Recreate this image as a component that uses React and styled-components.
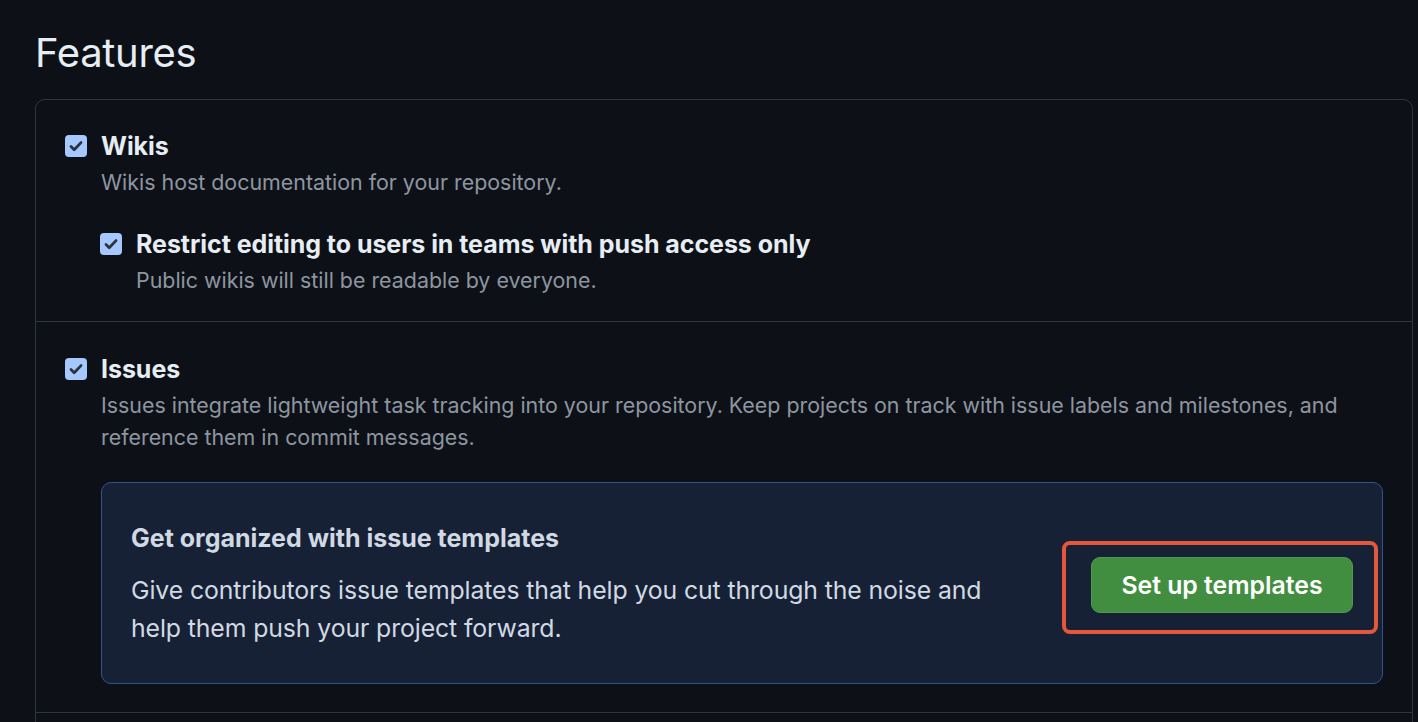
import { createGlobalStyle, styled } from "styled-components";

const GlobalStyle = createGlobalStyle`
  html, body {
    margin: 0;
    background: #0d1117;
  }
  body {
    font-family: Inter, "Noto Sans", "Liberation Sans", sans-serif;
    color: #e6edf3;
    overflow: hidden;
  }
`;

const Page = styled.div`
  padding: 0 5px 0 35px;
`;

const Heading = styled.h2`
  margin: 0;
  padding-top: 28px;
  height: 99px;
  box-sizing: border-box;
  font-size: 40px;
  font-weight: 400;
  line-height: 50px;
  letter-spacing: -0.3px;
  color: #e6edf3;
`;

const Box = styled.div`
  border: 1px solid #30363d;
  border-radius: 10px;
`;

const Section = styled.div`
  padding: ${(p) => p.$pad || "34px 30px 25px 29px"};
  min-height: ${(p) => p.$minHeight || "0"};
  & + & {
    border-top: 1px solid #30363d;
  }
`;

const Item = styled.div`
  display: grid;
  grid-template-columns: 22px 1fr;
  column-gap: 14px;
  margin-left: ${(p) => (p.$nested ? "35px" : "0")};
  margin-top: ${(p) => (p.$nested ? "34px" : "0")};
`;

const Check = styled.span`
  width: 22px;
  height: 22px;
  margin-top: 1px;
  border-radius: 4px;
  background: #a5c8ff;
  display: flex;
  align-items: center;
  justify-content: center;
`;

const Body = styled.div`
  min-width: 0;
`;

const Label = styled.div`
  font-size: 25px;
  font-weight: 700;
  line-height: 24px;
  letter-spacing: -0.05px;
  color: #e6edf3;
`;

const Note = styled.p`
  margin: 8px 0 0;
  font-size: 21.4px;
  line-height: 32px;
  color: #8d96a0;
`;

const Callout = styled.div`
  margin-top: 29px;
  display: flex;
  align-items: center;
  justify-content: space-between;
  padding: 40px 29px 36px 29px;
  background: #172136;
  border: 1px solid #34538c;
  border-radius: 10px;
`;

const CalloutText = styled.div`
  max-width: 890px;
`;

const CalloutTitle = styled.h3`
  margin: 0;
  font-size: 25px;
  font-weight: 700;
  line-height: 30px;
  color: #d1d9e3;
`;

const CalloutBody = styled.p`
  margin: 18px 0 0;
  font-size: 24.8px;
  line-height: 38px;
  letter-spacing: -0.1px;
  color: #d1d9e3;
`;

const ButtonWrap = styled.div`
  position: relative;
  flex-shrink: 0;
`;

const Highlight = styled.span`
  position: absolute;
  top: -16px;
  right: -25px;
  bottom: -21px;
  left: -29px;
  border: 4px solid #e3573c;
  border-radius: 8px;
  pointer-events: none;
`;

const Button = styled.button`
  display: block;
  width: 262px;
  height: 56px;
  border: 1px solid #4f9a4b;
  border-radius: 9px;
  background: #428e40;
  color: #ffffff;
  font-family: inherit;
  font-size: 24.8px;
  font-weight: 600;
  cursor: pointer;
`;

function CheckBox() {
  return (
    <Check>
      <svg width="16" height="16" viewBox="0 0 16 16" aria-hidden="true">
        <path
          d="M3 8.5l3.2 3.2L13 4.6"
          fill="none"
          stroke="#2d333b"
          strokeWidth="2.8"
          strokeLinecap="round"
          strokeLinejoin="round"
        />
      </svg>
    </Check>
  );
}

export default function App() {
  return (
    <>
      <GlobalStyle />
      <Page>
        <Heading>Features</Heading>
        <Box>
          <Section>
            <Item>
              <CheckBox />
              <Body>
                <Label>Wikis</Label>
                <Note>Wikis host documentation for your repository.</Note>
              </Body>
            </Item>
            <Item $nested>
              <CheckBox />
              <Body>
                <Label>Restrict editing to users in teams with push access only</Label>
                <Note>Public wikis will still be readable by everyone.</Note>
              </Body>
            </Item>
          </Section>
          <Section $pad="35px 29px 28px 29px">
            <Item>
              <CheckBox />
              <Body>
                <Label>Issues</Label>
                <Note>
                  Issues integrate lightweight task tracking into your repository. Keep projects on
                  track with issue labels and milestones, and reference them in commit messages.
                </Note>
                <Callout>
                  <CalloutText>
                    <CalloutTitle>Get organized with issue templates</CalloutTitle>
                    <CalloutBody>
                      Give contributors issue templates that help you cut through the noise and
                      help them push your project forward.
                    </CalloutBody>
                  </CalloutText>
                  <ButtonWrap>
                    <Highlight />
                    <Button>Set up templates</Button>
                  </ButtonWrap>
                </Callout>
              </Body>
            </Item>
          </Section>
          <Section $minHeight="60px" />
        </Box>
      </Page>
    </>
  );
}
